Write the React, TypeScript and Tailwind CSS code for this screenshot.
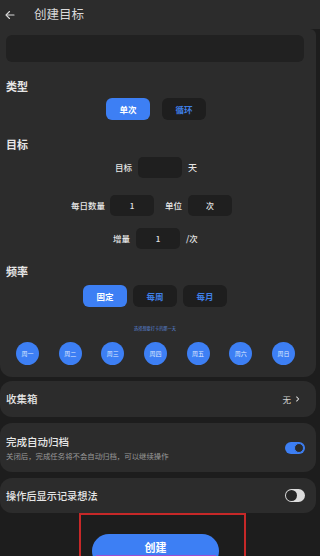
import React from "react";

const FONT = { fontFamily: '"Noto Sans CJK SC", "Noto Sans", sans-serif' };

function Chip({ label, active }: { label: string; active?: boolean }) {
  return (
    <div
      className={
        "h-[22px] w-[44px] rounded-[6px] flex items-center justify-center text-[8.5px] font-bold " +
        (active ? "bg-[#3d7ff4] text-white" : "bg-[#1e1e1e] text-[#3f7fe6]")
      }
    >
      {label}
    </div>
  );
}

function Field({ value }: { value?: string }) {
  return (
    <div className="h-[21px] w-[44px] rounded-[5px] bg-[#1f1f1f] flex items-center justify-center text-[8px] text-[#e5e5e5]">
      {value}
    </div>
  );
}

function Toggle({ on }: { on?: boolean }) {
  if (on) {
    return (
      <div className="w-[20px] h-[12px] rounded-full bg-[#3d7ff4] flex items-center justify-end pr-[1px]">
        <div className="w-[10px] h-[10px] rounded-full bg-[#2a2a2a] border border-[#3d7ff4]" />
      </div>
    );
  }
  return (
    <div className="w-[20px] h-[13px] rounded-full bg-[#dcdcdc] flex items-center pl-[1px]">
      <div className="w-[11px] h-[11px] rounded-full bg-[#262626]" />
    </div>
  );
}

export default function App() {
  const days = ["周一", "周二", "周三", "周四", "周五", "周六", "周日"];

  return (
    <div className="w-[320px] h-[556px] overflow-hidden bg-[#1d1d1d] text-[#e6e6e6]" style={FONT}>
      {/* header */}
      <div className="h-[29px] bg-[#2c2c2c] flex items-center">
        <svg className="ml-[4px]" width="12" height="12" viewBox="0 0 24 24" fill="none" stroke="#d8d8d8" strokeWidth="2.2" strokeLinecap="round" strokeLinejoin="round">
          <path d="M20 12H5" />
          <path d="M11 5l-7 7 7 7" />
        </svg>
        <span className="ml-[18px] text-[12.5px] text-[#d9d9d9] leading-none">创建目标</span>
      </div>

      {/* main form card */}
      <div className="mr-[4px] bg-[#2c2c2c] rounded-b-[12px] rounded-tr-[6px] pb-[12px]">
        <div className="pt-[6px] px-[6px]">
          <div className="h-[27px] w-[298px] rounded-[6px] bg-[#212121]" />
        </div>

        <div className="mt-[17px] h-[14px] leading-[14px] px-[6px] text-[11px] font-semibold">类型</div>
        <div className="mt-[5px] flex gap-[12px] pl-[106px]">
          <Chip label="单次" active />
          <Chip label="循环" />
        </div>

        <div className="mt-[17px] h-[14px] leading-[14px] px-[6px] text-[11px] font-semibold">目标</div>
        <div className="mt-[6px] flex items-center pl-[115px] text-[8.5px] font-medium">
          <span>目标</span>
          <div className="ml-[6px]"><Field /></div>
          <span className="ml-[6px] text-[9px]">天</span>
        </div>
        <div className="mt-[17px] flex items-center pl-[71px] text-[8.5px] font-medium">
          <span>每日数量</span>
          <div className="ml-[5px]"><Field value="1" /></div>
          <span className="ml-[11px]">单位</span>
          <div className="ml-[6px]"><Field value="次" /></div>
        </div>
        <div className="mt-[12px] flex items-center pl-[113px] text-[8.5px] font-medium">
          <span>增量</span>
          <div className="ml-[6px]"><Field value="1" /></div>
          <span className="ml-[6px]">/次</span>
        </div>

        <div className="mt-[15px] h-[14px] leading-[14px] px-[6px] text-[11px] font-semibold">频率</div>
        <div className="mt-[7px] flex gap-[6px] pl-[83px]">
          <Chip label="固定" active />
          <Chip label="每周" />
          <Chip label="每月" />
        </div>

        <div className="mt-[18px] h-[6px] flex items-center justify-center pr-[6px]">
          <span className="text-[4.2px] leading-none text-[#5b86d6]">选择想要打卡的那一天</span>
        </div>

        <div className="mt-[11px] flex justify-between pl-[16px] pr-[21px]">
          {days.map((d) => (
            <div key={d} className="w-[23px] h-[23px] rounded-full bg-[#3d7ff4] flex items-center justify-center text-[6px] text-[#dfe8ff]">
              {d}
            </div>
          ))}
        </div>
      </div>

      {/* inbox */}
      <div className="mt-[4px] mr-[4px] h-[36px] bg-[#2c2c2c] rounded-[12px] flex items-center justify-between pl-[6px] pr-[15px]">
        <span className="text-[10.5px] font-medium">收集箱</span>
        <span className="flex items-center gap-[3px] text-[8.5px] text-[#d0d0d0]">
          无
          <svg width="7" height="8" viewBox="0 0 24 24" fill="none" stroke="#e0e0e0" strokeWidth="3.5" strokeLinecap="round" strokeLinejoin="round">
            <path d="M9 5l7 7-7 7" />
          </svg>
        </span>
      </div>

      {/* auto archive */}
      <div className="mt-[6px] mr-[4px] h-[49px] bg-[#2c2c2c] rounded-[12px] flex items-center justify-between pl-[6px] pr-[11px]">
        <div className="flex flex-col">
          <span className="text-[10.5px] leading-[14px] font-medium">完成自动归档</span>
          <span className="mt-[2px] text-[7.4px] leading-[9px] text-[#9a9a9a]">关闭后，完成任务将不会自动归档，可以继续操作</span>
        </div>
        <Toggle on />
      </div>

      {/* show notes */}
      <div className="mt-[6px] mr-[4px] h-[35px] bg-[#2c2c2c] rounded-[12px] flex items-center justify-between pl-[6px] pr-[11px]">
        <span className="text-[10.2px] font-medium">操作后显示记录想法</span>
        <Toggle />
      </div>

      {/* create button */}
      <div className="ml-[79px] w-[167px] h-[60px] border-2 border-b-0 border-[#c62828] pt-[19px] pl-[11px]">
        <div className="relative w-[127px] h-[34px] rounded-full bg-[#3d7ff4] flex items-start justify-center pt-[6px] overflow-hidden">
          <span className="text-[11px] font-semibold text-white leading-[14px]">创建</span>
          <div className="absolute left-[4px] right-[3px] top-[21px] h-[2px] bg-[#9a4fd2]" />
        </div>
      </div>
    </div>
  );
}
